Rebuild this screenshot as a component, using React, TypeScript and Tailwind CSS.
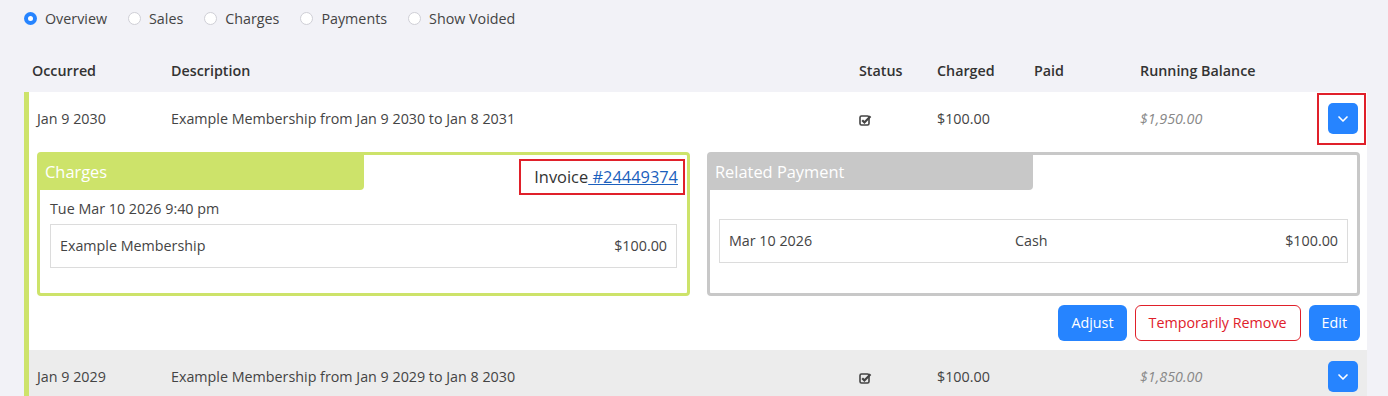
import { ChevronDown } from 'lucide-react'

const FILTERS = ['Overview', 'Sales', 'Charges', 'Payments', 'Show Voided']

function StatusIcon() {
  return (
    <svg width="13" height="12" viewBox="0 0 13 12" className="text-[#444]">
      <rect x="1" y="2" width="9" height="9" rx="1.5" fill="none" stroke="currentColor" strokeWidth="1.6" />
      <path d="M3.2 6.2 L5.4 8.4 L11.5 2.2" fill="none" stroke="currentColor" strokeWidth="2.2" />
    </svg>
  )
}

function ChevronButton() {
  return (
    <button className="w-[30px] h-[31px] rounded-[5px] bg-[#2684ff] flex items-center justify-center text-white">
      <ChevronDown className="w-4 h-4" strokeWidth={2.5} />
    </button>
  )
}

function Row({ date, desc, balance, gray, boxed }: { date: string; desc: string; balance: string; gray?: boolean; boxed?: boolean }) {
  return (
    <div className={`flex items-center h-[53px] text-[#444] ${gray ? 'bg-[#ececec]' : ''}`}>
      <div className="w-[134px] pl-2">{date}</div>
      <div className="w-[688px] pl-2">{desc}</div>
      <div className="w-[78px] pl-2 pt-0.5"><StatusIcon /></div>
      <div className="w-[97px] pl-2">$100.00</div>
      <div className="w-[106px] pl-2"></div>
      <div className="flex-1 pl-2 italic text-[#888]">{balance}</div>
      {boxed ? (
        <div className="w-[49px] h-[52px] mr-[1px] border-2 border-[#e0202a] flex items-center pl-[9px]">
          <ChevronButton />
        </div>
      ) : (
        <div className="w-[50px] flex items-center pl-[11px]">
          <ChevronButton />
        </div>
      )}
    </div>
  )
}

export default function App() {
  return (
    <div className="w-[1388px] h-[396px] overflow-hidden bg-[#f2f2f7] font-['Open_Sans',sans-serif] text-[14.3px] text-[#444]">
      {/* Filters */}
      <div className="h-[37px] pl-6 flex items-center gap-[21px]">
        {FILTERS.map((f, i) => (
          <label key={f} className="flex items-center gap-2 text-[#444]">
            {i === 0 ? (
              <span className="w-[13px] h-[13px] rounded-full bg-[#2684ff] flex items-center justify-center">
                <span className="w-[5px] h-[5px] rounded-full bg-white" />
              </span>
            ) : (
              <span className="w-[13px] h-[13px] rounded-full bg-white border border-[#cfcfd6]" />
            )}
            {f}
          </label>
        ))}
      </div>

      <div className="pl-6 pr-[21px] pt-[13px]">
        {/* Header */}
        <div className="flex items-center h-[42px] font-semibold text-[#333]">
          <div className="w-[139px] pl-2">Occurred</div>
          <div className="w-[688px] pl-2">Description</div>
          <div className="w-[78px] pl-2">Status</div>
          <div className="w-[97px] pl-2">Charged</div>
          <div className="w-[106px] pl-2">Paid</div>
          <div className="flex-1 pl-2">Running Balance</div>
        </div>

        <div className="border-l-[5px] border-[#cde36a]">
          <div className="bg-white">
            <Row date="Jan 9 2030" desc="Example Membership from Jan 9 2030 to Jan 8 2031" balance="$1,950.00" boxed />

            {/* Expanded */}
            <div className="pl-2 pr-[7px] pt-[7px] pb-[9px]">
              <div className="flex gap-[17px]">
                {/* Charges */}
                <div className="flex-1 h-[144px] border-[3px] border-[#cde36a] rounded-[4px] flex flex-col">
                  <div className="flex items-start justify-between">
                    <div className="w-[324px] h-[35px] bg-[#cde36a] rounded-br-[4px] pl-[5px] flex items-center text-[16.4px] text-white">
                      Charges
                    </div>
                    <div className="mt-1 mr-[2px] h-[36px] w-[166px] border-2 border-[#e0202a] flex items-center justify-end pr-[5px] text-[16.4px] text-[#333]">
                      Invoice<a className="text-[#1b5fbd] underline">&nbsp;#24449374</a>
                    </div>
                  </div>
                  <div className="px-[10px] mt-[4px]">
                    <div className="leading-[20px]">Tue Mar 10 2026 9:40 pm</div>
                    <div className="mt-[5px] h-[44px] border border-[#dcdcdc] flex items-center justify-between px-[9px]">
                      <span>Example Membership</span>
                      <span>$100.00</span>
                    </div>
                  </div>
                </div>

                {/* Related Payment */}
                <div className="flex-1 h-[144px] border-[3px] border-[#c8c8c8] rounded-[4px] flex flex-col">
                  <div className="w-[323px] h-[35px] bg-[#c8c8c8] rounded-br-[4px] pl-[5px] flex items-center text-[16.4px] text-white">
                    Related Payment
                  </div>
                  <div className="px-[9px] pt-[29px]">
                    <div className="h-[44px] border border-[#dcdcdc] flex items-center px-[9px]">
                      <span className="w-[286px]">Mar 10 2026</span>
                      <span className="flex-1">Cash</span>
                      <span>$100.00</span>
                    </div>
                  </div>
                </div>
              </div>

              <div className="flex justify-end gap-2 mt-[9px]">
                <button className="h-[36px] px-[13px] rounded-[6px] bg-[#2684ff] text-white">Adjust</button>
                <button className="h-[36px] px-[13px] rounded-[6px] bg-white border border-[#e0202a] text-[#e0202a]">Temporarily Remove</button>
                <button className="h-[36px] px-[13px] rounded-[6px] bg-[#2684ff] text-white">Edit</button>
              </div>
            </div>
          </div>

          <Row date="Jan 9 2029" desc="Example Membership from Jan 9 2029 to Jan 8 2030" balance="$1,850.00" gray />
        </div>
      </div>
    </div>
  )
}
